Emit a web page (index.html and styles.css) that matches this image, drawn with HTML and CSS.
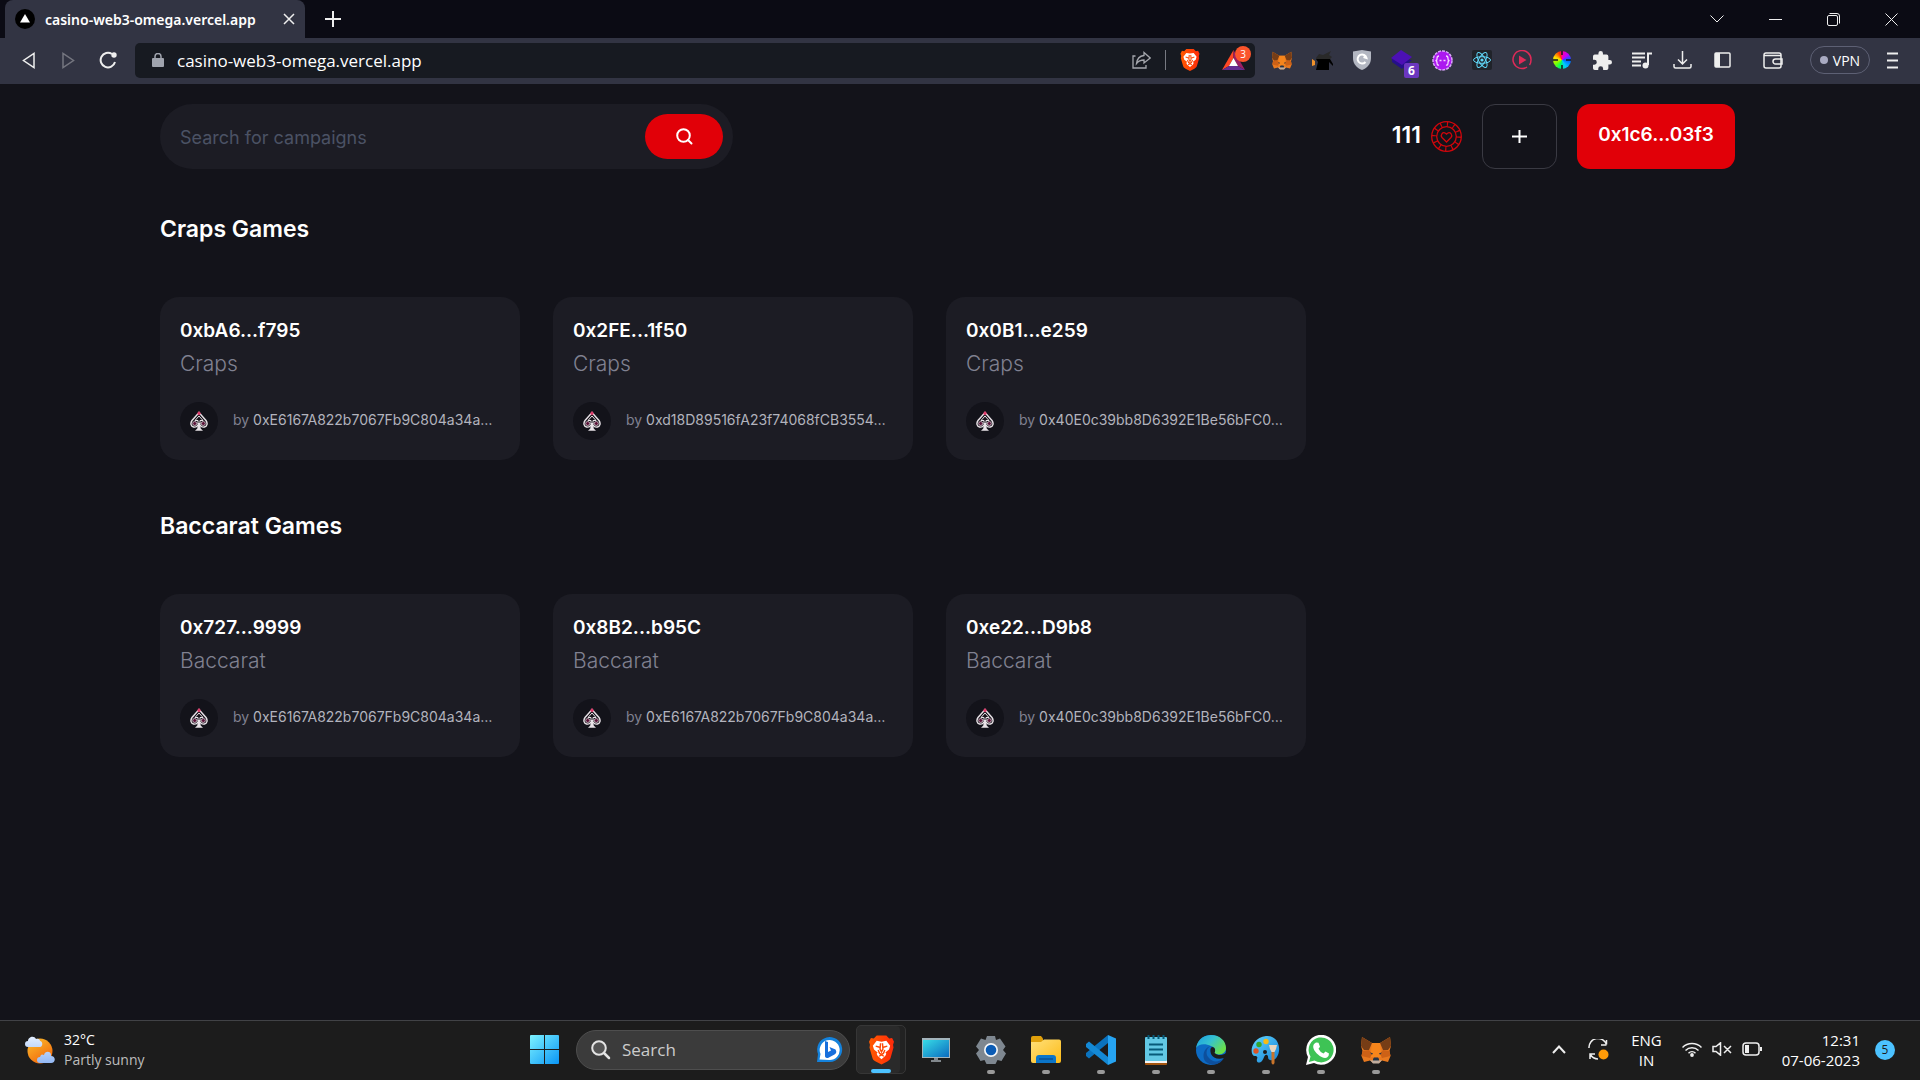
FILE: index.html
```html
<!DOCTYPE html>
<html lang="en">

<head>
    <meta charset="UTF-8">
    <title>casino-web3-omega.vercel.app</title>
    <link rel="stylesheet" href="styles.css">
</head>

<body>
    <!-- shared icons -->
    <svg class="defs" aria-hidden="true">
        <defs>
            <linearGradient id="gBrave" x2="1"><stop stop-color="#ff5a00"/><stop offset="1" stop-color="#ff2a0a"/></linearGradient>
            <linearGradient id="gWin" x2="1" y2="1"><stop stop-color="#7df3ff"/><stop offset="1" stop-color="#0a95f5"/></linearGradient>
            <linearGradient id="gScreen" x2="1" y2="1"><stop stop-color="#37dbe6"/><stop offset="1" stop-color="#0b6cc0"/></linearGradient>
            <linearGradient id="gSun" x2=".6" y2="1"><stop stop-color="#fbc02d"/><stop offset="1" stop-color="#f26a0c"/></linearGradient>
            <linearGradient id="gFolder" x2="1" y2="1"><stop stop-color="#ffe07a"/><stop offset="1" stop-color="#fdbb17"/></linearGradient>
            <linearGradient id="gEdge" x2="1" y2=".6"><stop stop-color="#1b9de2"/><stop offset=".5" stop-color="#35c1d0"/><stop offset="1" stop-color="#6be04a"/></linearGradient>
            <linearGradient id="gPaint" x2="1" y2="1"><stop stop-color="#62d8ff"/><stop offset="1" stop-color="#1380d8"/></linearGradient>
            <linearGradient id="gCloud" y2="1" x2="0"><stop stop-color="#e3efff"/><stop offset="1" stop-color="#93b8f3"/></linearGradient>
        </defs>
        <symbol id="brave" viewBox="0 0 26 30">
            <path fill="url(#gBrave)" d="M8 0h10l3 3 3-.5 2 4-1 3 .5 3-3 10.500c-.5 2-2 3-3.500 4L13 30l-6-3c-2-1-3-2-3.500-4L.5 12.500 1 9.500 0 6.500l2-4L5 3z"/>
            <path fill="#fff" d="M8 5.500l5 .8 5-.8 4 5-1.200 4-3.800 3 1 1.500-1 2-4 3.500-4-3.500-1-2 1-1.500-3.800-3L4 10.500z"/>
            <path fill="none" stroke="#ff4a08" stroke-width="1.500" d="M7 11l4 1.200M19 11l-4 1.200M12 8l-.5 6 1.500 3 1.500-3-.5-6M9.500 15l1.500 3.500 2 1 2-1 1.500-3.500M10.500 21.500l2.500-1.500 2.500 1.500"/>
        </symbol>
        <symbol id="fox" viewBox="0 0 30 28">
            <path fill="#e8791f" d="M1 1l10 6h8L29 1l1 9-1.500 5 1 5-2.500 6-6-1.500-3 2.500h-6l-3-2.500L3 26 .5 20l1-5L0 10z"/>
            <path fill="#763d16" d="M1 1l10 6-3 7H3l-3-4zM29 1l-10 6 3 7h5l3-4z"/>
            <path fill="#f6851b" d="M11 7h8l1 8 1.500 6h-13L10 15z"/>
            <path fill="#cd6116" d="M1.500 15L8 14l3 4-2 4-8.500-2zM28.500 15l-6.500-1-3 4 2 4 8.500-2z"/>
            <path fill="#233447" d="M9 16.500l3 .8-1 1.400zM21 16.500l-3 .8 1 1.400zM12 23l1-1.500h4l1 1.500v2h-6z"/>
            <path fill="#c0ad9e" d="M9 24l3 .5h6l3-.5-3 3.500h-6z"/>
        </symbol>
        <symbol id="spade" viewBox="0 0 18 20">
            <path fill="#17131a" stroke="#e9e3e8" stroke-width="1.400" d="M9 1.500L12 5l4 4.500c2 3 1 6-1.500 6.500-1.800.4-3.300-.2-4-1.500h-3c-.7 1.300-2.200 1.900-4 1.500C1 15.500 0 12.500 2 9.500L6 5z"/>
            <path fill="none" stroke="#e9e3e8" d="M9 5L5 9.500h3V13M9 5l4 4.500h-3V13"/>
            <path fill="#e9e3e8" d="M7.800 12h2.400l.5 5.500L13 19.800H5l2.300-2.300z"/>
            <circle cx="4.700" cy="12.500" r="2" fill="#5a1238" stroke="#d8c8d2" stroke-width=".8"/>
            <circle cx="13.300" cy="12.500" r="2" fill="#5a1238" stroke="#d8c8d2" stroke-width=".8"/>
            <path fill="#e0406e" d="M9 0l2 2.500-2 2-2-2z"/>
        </symbol>
    </svg>

    <!-- browser chrome -->
    <header class="browser">
        <div class="tabs">
            <div class="tab">
                <svg class="favicon" viewBox="0 0 20 20"><circle cx="10" cy="10" r="10" fill="#000"/><path d="M10 5l5 8.500H5z" fill="#fff"/></svg>
                <span class="tab-title">casino-web3-omega.vercel.app</span>
                <button class="tab-close" aria-label="Close tab"><svg width="12" height="12" viewBox="0 0 12 12"><path class="line" d="M1 1l10 10M11 1L1 11"/></svg></button>
            </div>
            <button class="new-tab" aria-label="New tab"><svg width="16" height="16" viewBox="0 0 16 16"><path class="line thick" d="M8 0v16M0 8h16"/></svg></button>
            <div class="window-buttons">
                <button aria-label="Search tabs"><svg width="14" height="8" viewBox="0 0 14 8"><path class="line thin" d="M.5.5L7 7 13.500.5"/></svg></button>
                <button aria-label="Minimize"><svg width="13" height="13" viewBox="0 0 13 13"><path class="line thin" d="M0 6.500h13"/></svg></button>
                <button aria-label="Restore"><svg width="13" height="13" viewBox="0 0 13 13"><rect class="line thin" x=".5" y="2.500" width="10" height="10" rx="1.500"/><path class="line thin" d="M2.500.5h7.500q2.500 0 2.500 2.500v7.500"/></svg></button>
                <button aria-label="Close"><svg width="13" height="13" viewBox="0 0 13 13"><path class="line thin" d="M.5.5l12 12M12.500.5l-12 12"/></svg></button>
            </div>
        </div>
        <div class="toolbar">
            <button class="tool" aria-label="Back"><svg width="13" height="17" viewBox="0 0 13 17"><path class="line" d="M12 1.500v14L1.500 8.500z"/></svg></button>
            <button class="tool dim" aria-label="Forward"><svg width="13" height="17" viewBox="0 0 13 17"><path class="line" d="M1 1.500v14l10.500-7z"/></svg></button>
            <button class="tool" aria-label="Reload"><svg width="18" height="18" viewBox="0 0 18 18"><path class="line thick" d="M13 3A7.300 7.300 0 1 0 16 11"/><circle cx="15" cy="4" r="2.700" fill="#eee"/></svg></button>
            <div class="address">
                <svg class="lock" width="12" height="14" viewBox="0 0 12 14"><rect y="5" width="12" height="9" rx="1" fill="#a0a4ae"/><path d="M3 6V3.500a3 3 0 0 1 6 0V6" fill="none" stroke="#a0a4ae" stroke-width="1.500"/></svg>
                <input type="text" class="url" aria-label="Address" value="casino-web3-omega.vercel.app">
                <button class="share" aria-label="Share"><svg width="19" height="18" viewBox="0 0 19 18"><path fill="none" stroke="#a5a7ad" stroke-width="1.300" d="M3.500 5H1v12h13v-3M12 1.500L18.200 7 12 12V9C8.500 9 6 10.500 4.500 12.500 5 8 8 5 12 4.500z"/></svg></button>
                <button class="shields" aria-label="Shields"><svg width="20" height="22"><use href="#brave"/></svg></button>
                <button class="rewards" aria-label="Rewards"><svg width="23" height="20" viewBox="0 0 23 20"><path fill="#ff4724" d="M11.500 0L0 20l7-4 4.500-8z"/><path fill="#9e1f63" d="M11.500 0L23 20l-7-4-4.500-8z"/><path fill="#662d91" d="M0 20h23l-7-4H7z"/><path fill="#fff" d="M11.500 8L7 16h9z"/></svg><span class="rewards-count">3</span></button>
            </div>
            <div class="extensions">
                <button class="tool" aria-label="MetaMask"><svg width="20" height="19"><use href="#fox"/></svg></button>
                <button class="tool" aria-label="Cat"><svg width="21" height="20" viewBox="0 0 21 20"><path fill="#292929" d="M4 8l3-4 4 1 8-4-2 4 3 2-2 2H4z"/><path fill="#000" d="M4 9h14l3 5v2l-4-4v8H4l2-8z"/><path fill="#f0922b" d="M0 9l3 2v4l-3 1z"/></svg></button>
                <button class="tool" aria-label="Shield"><svg width="18" height="20" viewBox="0 0 18 20"><path fill="#b3b7c2" d="M0 1.500L9 0l9 1.500V8c0 6-4 10-9 12C4 18 0 14 0 8z"/><path fill="none" stroke="#fff" stroke-width="2" d="M12.500 12A4.500 4.500 0 1 1 13.500 8l-3-1"/></svg></button>
                <button class="tool stack" aria-label="Requests"><svg width="22" height="20" viewBox="0 0 22 20"><path fill="#25108a" d="M1 8l20 2-10 9L1 12z"/><path fill="#4c10b5" d="M10 0l11 7-10 8L0 8z"/></svg><span class="ext-count">6</span></button>
                <button class="tool" aria-label="Code"><svg width="21" height="21" viewBox="0 0 21 21"><circle cx="10.500" cy="10.500" r="9.500" fill="#ac18f0" stroke="#dca6ff" stroke-width="1.500" stroke-dasharray="3 1"/><path fill="none" stroke="#f3d3ff" stroke-width="1.300" d="M7 6q-2 0-2 2.500T3.500 10.500Q5 10.500 5 13t2 2M14 6q2 0 2 2.500t1.500 2Q16 10.500 16 13t-2 2M7.500 10.500h2M11.500 10.500h2"/></svg></button>
                <button class="tool" aria-label="React tools"><svg width="20" height="20" viewBox="0 0 20 20"><rect width="20" height="20" rx="2" fill="#20232a"/><g fill="none" stroke="#61dafb"><ellipse cx="10" cy="10" rx="8.500" ry="3.300"/><ellipse cx="10" cy="10" rx="8.500" ry="3.300" transform="rotate(60 10 10)"/><ellipse cx="10" cy="10" rx="8.500" ry="3.300" transform="rotate(120 10 10)"/></g><circle cx="10" cy="10" r="1.600" fill="#61dafb"/></svg></button>
                <button class="tool" aria-label="Player"><svg width="20" height="20" viewBox="0 0 20 20"><path fill="none" stroke="#e02a58" stroke-width="1.500" d="M15 17A9 9 0 1 1 19 10q0 3-1.500 5"/><path fill="#e02a58" d="M7 5.500l7.500 4.500L7 14.500z"/></svg></button>
                <button class="tool" aria-label="Color picker"><span class="wheel"><svg width="18" height="18" viewBox="0 0 18 18"><path stroke="#16161c" stroke-width="1.500" d="M9 0v4M9 14v4M0 9h5M13 9h5"/></svg></span></button>
                <button class="tool" aria-label="Extensions"><svg width="19" height="19" viewBox="2 1 21 21"><path fill="#eee" d="M20.500 11H19V7a2 2 0 0 0-2-2h-4V3.500a2.500 2.500 0 0 0-5 0V5H4a2 2 0 0 0-2 2v3.800h1.500a2.700 2.700 0 0 1 0 5.400H2V20a2 2 0 0 0 2 2h3.800v-1.500a2.700 2.700 0 0 1 5.400 0V22H17a2 2 0 0 0 2-2v-4h1.500a2.500 2.500 0 0 0 0-5z"/></svg></button>
                <button class="tool" aria-label="Media"><svg width="20" height="17" viewBox="0 0 20 17"><path class="line thick" d="M0 1.500h13M0 5.500h13M0 9.500h9M0 13.500h9M16 13V1.500h4"/><circle cx="13.500" cy="13.500" r="3" fill="#eee"/></svg></button>
                <button class="tool" aria-label="Downloads"><svg width="19" height="18" viewBox="0 0 19 18"><path class="line" d="M9.500 0v13M5 8.500l4.500 4.500L14 8.500M1 13v2.500q0 1.500 1.500 1.500h14q1.500 0 1.500-1.500V13"/></svg></button>
                <button class="tool" aria-label="Sidebar"><svg width="17" height="16" viewBox="0 0 17 16"><rect class="line" x="1" y="1" width="15" height="14" rx="1"/><path fill="#eee" d="M1 1h5v14H1z"/></svg></button>
            </div>
            <button class="tool wallet" aria-label="Wallet"><svg width="20" height="18" viewBox="0 0 20 18"><rect class="line" x="1" y="2" width="17" height="15" rx="2"/><path class="line" d="M1 4.500h17M19 8h-6.500a2.500 2.500 0 0 0 0 5H19z"/></svg></button>
            <button class="vpn">VPN</button>
            <button class="tool menu" aria-label="Menu"><svg width="11" height="17" viewBox="0 0 11 17"><path class="line thick" d="M0 1.500h11M0 8.500h11M0 15.500h11"/></svg></button>
        </div>
    </header>

    <!-- casino page -->
    <main class="page">
        <nav class="navbar">
            <form class="search">
                <input type="text" class="search-input" aria-label="Search for campaigns" placeholder="Search for campaigns">
                <button type="button" class="search-button" aria-label="Search"><svg width="17" height="17" viewBox="0 0 17 17"><circle cx="7.500" cy="7.500" r="6.300" fill="none" stroke="#fff" stroke-width="2"/><path stroke="#fff" stroke-width="2" stroke-linecap="round" d="M12 12l3.500 3.500"/></svg></button>
            </form>
            <div class="account">
                <div class="balance">
                    <span>111</span>
                    <svg width="31" height="31" viewBox="0 0 31 31" fill="none" stroke="#d0060c" stroke-width="1.300">
                        <circle cx="15.500" cy="15.500" r="14.800"/>
                        <circle cx="15.500" cy="15.500" r="9.800"/>
                        <circle cx="15.500" cy="15.500" r="12.300" stroke-width="5" stroke-dasharray="1.200 5.240"/>
                        <path d="M15.500 21l-4.500-4.500c-2-2.500.5-6 3.500-4.300l1 1 1-1c3-1.700 5.500 1.800 3.500 4.300z"/>
                    </svg>
                </div>
                <button class="add" aria-label="Add chips"><svg width="15" height="13" viewBox="0 0 15 13"><path stroke="#fff" stroke-width="2" d="M7.500 0v13M0 6.500h15"/></svg></button>
                <button class="wallet-address">0x1c6...03f3</button>
            </div>
        </nav>

        <section class="games">
            <h1>Craps Games</h1>
            <div class="cards">
                <article class="card">
                    <h2>0xbA6...f795</h2>
                    <p class="kind">Craps</p>
                    <div class="owner"><span class="avatar"><svg width="18" height="20"><use href="#spade"/></svg></span><p>by <span>0xE6167A822b7067Fb9C804a34a…</span></p></div>
                </article>
                <article class="card">
                    <h2>0x2FE...1f50</h2>
                    <p class="kind">Craps</p>
                    <div class="owner"><span class="avatar"><svg width="18" height="20"><use href="#spade"/></svg></span><p>by <span>0xd18D89516fA23f74068fCB3554…</span></p></div>
                </article>
                <article class="card">
                    <h2>0x0B1...e259</h2>
                    <p class="kind">Craps</p>
                    <div class="owner"><span class="avatar"><svg width="18" height="20"><use href="#spade"/></svg></span><p>by <span>0x40E0c39bb8D6392E1Be56bFC0…</span></p></div>
                </article>
            </div>
        </section>

        <section class="games">
            <h1>Baccarat Games</h1>
            <div class="cards">
                <article class="card">
                    <h2>0x727...9999</h2>
                    <p class="kind">Baccarat</p>
                    <div class="owner"><span class="avatar"><svg width="18" height="20"><use href="#spade"/></svg></span><p>by <span>0xE6167A822b7067Fb9C804a34a…</span></p></div>
                </article>
                <article class="card">
                    <h2>0x8B2...b95C</h2>
                    <p class="kind">Baccarat</p>
                    <div class="owner"><span class="avatar"><svg width="18" height="20"><use href="#spade"/></svg></span><p>by <span>0xE6167A822b7067Fb9C804a34a…</span></p></div>
                </article>
                <article class="card">
                    <h2>0xe22...D9b8</h2>
                    <p class="kind">Baccarat</p>
                    <div class="owner"><span class="avatar"><svg width="18" height="20"><use href="#spade"/></svg></span><p>by <span>0x40E0c39bb8D6392E1Be56bFC0…</span></p></div>
                </article>
            </div>
        </section>
    </main>

    <!-- windows taskbar -->
    <footer class="taskbar">
        <div class="weather">
            <svg width="30" height="28" viewBox="0 0 30 28"><circle cx="15" cy="15" r="12.500" fill="url(#gSun)"/><path fill="url(#gCloud)" d="M3 11a3 3 0 0 1 0-6c0-4 6-6 8-2 3-1 4 1 4 2 3 0 3 6 0 6zM15 27a3 3 0 0 1 0-6c1-3 2-3 4-2 1-5 8-4 7 1 5 0 5 7 0 7z"/></svg>
            <div><p>32°C</p><p class="muted">Partly sunny</p></div>
        </div>
        <div class="apps">
            <button class="app" aria-label="Start"><svg width="29" height="29" viewBox="0 0 29 29"><path fill="url(#gWin)" d="M1 0h13v14H0V1q0-1 1-1zM15 0h13q1 0 1 1v13H15zM0 15h14v14H1q-1 0-1-1zM15 15h14v13q0 1-1 1H15z"/></svg></button>
            <label class="task-search">
                <svg width="20" height="20" viewBox="0 0 20 20"><circle cx="8" cy="8" r="6.800" fill="#555" stroke="#e4e4e4" stroke-width="2"/><path stroke="#e4e4e4" stroke-width="2.500" stroke-linecap="round" d="M13 13l5 5"/></svg>
                <input type="text" aria-label="Search Windows" placeholder="Search">
                <svg width="26" height="26" viewBox="0 0 26 26"><path fill="#1482dc" d="M0 25l1-8A12.500 12.500 0 1 1 13 25z"/><path fill="#fff" d="M2.500 22.500l1-5.500a10 10 0 1 1 9 6z"/><path fill="#176fdc" d="M8 4l3 1v10l3-1.500-1.500-3.500 6 2.500q2 3-1 5L11 21q-3 0-3-2z"/></svg>
            </label>
            <button class="app active" aria-label="Brave"><svg width="25" height="30"><use href="#brave"/></svg></button>
            <button class="app" aria-label="This PC"><svg width="28" height="24" viewBox="0 0 28 24"><path fill="#81878c" d="M12 18h4v4h3v2H9v-2h3z"/><path fill="#a3b4bb" d="M0 0h28v20H0z"/><path fill="url(#gScreen)" d="M1 2h26v17H1z"/></svg></button>
            <button class="app open" aria-label="Settings"><svg width="30" height="30" viewBox="0 0 30 30"><path fill="#7e8790" d="M11 1l8 0 1 4 4-1.500 5.500 8L27 15l3 3.500-4.500 7.500-4-1-2 4h-9l-2-4-4 1L0 18.500 3 15 0 11.500 5 3.500 9.500 5z"/><circle cx="15" cy="15" r="7" fill="#f3f5f7"/><circle cx="15" cy="15" r="5.300" fill="#0b5cb5"/></svg></button>
            <button class="app open" aria-label="File Explorer"><svg width="30" height="27" viewBox="0 0 30 27"><path fill="#e0a00b" d="M0 2q0-2 2-2h8l2 2.500V8H0z"/><path fill="url(#gFolder)" d="M0 6h10l3-2.500h15q2 0 2 2V25q0 2-2 2H2q-2 0-2-2z"/><path fill="#0b75c9" d="M5 27v-5q0-3 3-3h14q3 0 3 3v5z"/><path stroke="#063f7c" d="M8 23h14"/></svg></button>
            <button class="app open" aria-label="Visual Studio Code"><svg width="30" height="30" viewBox="0 0 30 30"><path fill="#0b73be" d="M22 0v8L3 23.500 0 21v-3z"/><path fill="#1489d5" d="M0 9l3-2.500L22 22v8L0 12z"/><path fill="#26a4f2" d="M22 0l8 3.500v23L22 30z"/></svg></button>
            <button class="app open" aria-label="Notepad"><svg width="22" height="30" viewBox="0 0 22 30"><rect y="24" width="22" height="6" rx="1" fill="#a4550f"/><rect y="22" width="22" height="6" fill="#f4f4f4"/><rect y="2" width="22" height="24" rx="1" fill="#62c8e4"/><path stroke="#075a79" stroke-width="2" d="M4 9.500h14M4 14.500h14M4 19.500h14M3.500 0v4M8.500 0v4M13.500 0v4M18.500 0v4"/></svg></button>
            <button class="app open" aria-label="Edge"><svg width="30" height="30" viewBox="0 0 30 30"><circle cx="15" cy="15" r="15" fill="#0d6bc4"/><path fill="url(#gEdge)" d="M0 13C2 3 9 0 15 0c9 0 15 6 15 13 0 6-7 8-12 5 2-2 1-6-3-7C9 8 2 9 0 13z"/><path fill="#0d4f9c" d="M15 11c-5 2-6 8-2 12 4 5 10 4 15 0-5 8-13 8-18 4C5 22 8 12 15 11z"/><path fill="#1c1c1c" d="M16 12c3 0 4 3 2.500 6 2.500 2.500 7.500 3 11.500 0v4l-2 1c-6 2-11 0-13-4-1-3-1-6 1-7z"/></svg></button>
            <button class="app open" aria-label="Paint"><svg width="30" height="30" viewBox="0 0 30 30"><path fill="url(#gPaint)" d="M15 1C24 0 29 8 28 16c-1 7-5 10-9 9-3-1-1-4-3-5-3-1-3 4-5 6-3 3-6 1-5-2 1-2 0-3-2-3-6 0-5-18 11-20z"/><circle cx="8" cy="9.500" r="2.700" fill="#31a52c"/><circle cx="15" cy="6.500" r="2.700" fill="#f6bb13"/><circle cx="5" cy="16" r="2.700" fill="#db5426"/><circle cx="14" cy="17" r="2" fill="#1c1c1c"/><path fill="#c9742a" d="M20.500 17h3v11q-1.500 3-3 0z"/><path fill="#e8d6bf" d="M18 10h8l-1 4-1.500 3h-3L19 14z"/></svg></button>
            <button class="app open" aria-label="WhatsApp"><svg width="30" height="30" viewBox="0 0 30 30"><path fill="#fff" d="M0 30l2-8A15 15 0 1 1 8 28z"/><path fill="#3ec355" d="M3 27l1.500-5.500A12.500 12.500 0 1 1 8.500 25.500z"/><path fill="#fff" d="M10 7.500l2.500.2 1.500 4-1.500 2q1.500 3.300 5 4.800l2-2 3.500 2q0 3-2 4c-2 1-6 0-9-3-4-3.500-6-7.500-4-10.500z"/></svg></button>
            <button class="app open" aria-label="MetaMask"><svg width="30" height="28"><use href="#fox"/></svg></button>
        </div>
        <div class="tray">
            <button class="tray-more" aria-label="Hidden icons"><svg width="14" height="9" viewBox="0 0 14 9"><path class="line thick" d="M1 8l6-6.500L13 8"/></svg></button>
            <svg width="21" height="21" viewBox="0 0 21 21"><path class="line" d="M1 9A9 9 0 0 1 18.500 5.500V1M18.500 6H13M2 20v-5h5M2 15q3 5 8 5"/><circle cx="15.500" cy="15.500" r="5" fill="#ff9b08"/></svg>
            <div class="language"><p>ENG</p><p>IN</p></div>
            <div class="status">
                <svg width="20" height="15" viewBox="0 0 20 15"><path class="line" d="M.5 5.500a13.500 13.500 0 0 1 19 0M3.500 8.500a9.300 9.300 0 0 1 13 0M6.500 11.200a5 5 0 0 1 7 0"/><circle cx="10" cy="13" r="1.900" fill="#eee"/></svg>
                <svg width="20" height="14" viewBox="0 0 20 14"><path class="line" d="M1 4.500h3L8.500.800v12.400L4 9.500H1zM12 4l7 7M19 4l-7 7"/></svg>
                <svg width="20" height="14" viewBox="0 0 20 14"><rect class="line" x="1" y="1" width="16" height="12" rx="3"/><path fill="#eee" d="M3 3h4v8H3zM18 5h2v4h-2z"/></svg>
            </div>
            <div class="clock"><p>12:31</p><p>07-06-2023</p></div>
            <span class="notifications">5</span>
        </div>
    </footer>
</body>

</html>
```
FILE: styles.css
```css
* {
    box-sizing: border-box;
}

body {
    background-color: #13131a;
    color: #ffffff;
    display: flex;
    flex-direction: column;
    font-family: "Open Sans", "Noto Sans", sans-serif;
    margin: 0;
    min-height: 100vh;
}

h1, h2, p {
    margin: 0;
}

button, input {
    background: none;
    border: none;
    color: inherit;
    font-family: inherit;
    margin: 0;
    outline: none;
    padding: 0;
}

button {
    align-items: center;
    display: flex;
    justify-content: center;
}

svg {
    flex: none;
}

.defs {
    height: 0;
    position: absolute;
    width: 0;
}

.line {
    fill: none;
    stroke: #eeeeee;
    stroke-width: 1.5;
}

.thin {
    stroke-width: 1;
}

.thick {
    stroke-width: 2;
}

/* browser */
.tabs {
    background-color: #0b0b14;
    display: flex;
    height: 38px;
    padding-left: 5px;
}

.tab {
    align-items: center;
    background-color: #323443;
    border-radius: 8px 8px 0 0;
    display: flex;
    padding: 0 10px;
    width: 300px;
}

.favicon {
    height: 20px;
    margin-right: 10px;
    width: 20px;
}

.tab-title {
    flex: 1;
    font-family: "Noto Sans", sans-serif;
    font-size: 14px;
    font-weight: 600;
    white-space: nowrap;
}

.new-tab {
    margin-left: 20px;
}

.window-buttons {
    display: flex;
    margin-left: auto;
}

.window-buttons button {
    width: 58px;
}

.toolbar {
    align-items: center;
    background-color: #323443;
    display: flex;
    height: 46px;
    padding: 0 6px 2px 8px;
}

.tool {
    flex: none;
    height: 40px;
    position: relative;
    width: 40px;
}

.dim {
    opacity: 0.35;
}

.address {
    align-items: center;
    background-color: #171a21;
    border-radius: 5px;
    display: flex;
    flex: 1;
    height: 35px;
    margin: 0 7px;
    padding: 0 10px 0 17px;
}

.url {
    flex: 1;
    font-size: 17px;
    margin-left: 13px;
}

.share {
    border-right: 1px solid #777a82;
    height: 20px;
    padding-right: 14px;
}

.shields {
    margin: 0 22px 0 14px;
}

.rewards {
    position: relative;
}

.rewards-count {
    background-color: #fb542b;
    border-radius: 8px;
    font-size: 10px;
    line-height: 16px;
    position: absolute;
    right: -6px;
    top: -4px;
    width: 16px;
}

.extensions {
    display: flex;
}

.ext-count {
    background-color: #6b37bf;
    border-radius: 2px;
    bottom: 2px;
    font-size: 12px;
    font-weight: bold;
    line-height: 15px;
    position: absolute;
    right: 3px;
    width: 15px;
}

.wheel {
    background: conic-gradient(#ff00a0, #c000ff 45deg, #0060ff 90deg, #00c8ff 150deg, #00ff60 200deg, #80ff00 240deg, #ffe000 290deg, #ff3000 340deg, #ff00a0);
    border-radius: 9px;
    display: flex;
}

.wallet {
    margin: 0 17px 0 11px;
}

.vpn {
    border: 1px solid #5d6074;
    border-radius: 14px;
    font-size: 14px;
    gap: 5px;
    height: 28px;
    width: 60px;
}

.vpn::before {
    background-color: #a9abc2;
    border-radius: 4px;
    content: "";
    height: 8px;
    width: 8px;
}

.menu {
    width: 44px;
}

/* page */
.page {
    flex: 1;
    font-family: Inter, sans-serif;
    padding: 20px 185px 0 160px;
}

.navbar {
    display: flex;
    justify-content: space-between;
}

.search {
    align-items: center;
    background-color: #1c1c24;
    border-radius: 33px;
    display: flex;
    height: 65px;
    padding: 0 10px 0 20px;
    width: 573px;
}

.search-input {
    flex: 1;
    font-size: 18px;
    padding-top: 2px;
}

.search-input::placeholder {
    color: #4b5264;
}

.search-button {
    background-color: #e10008;
    border-radius: 23px;
    height: 45px;
    width: 78px;
}

.account {
    display: flex;
    gap: 20px;
}

.balance {
    align-items: center;
    display: flex;
    font-size: 23px;
    font-weight: 600;
    gap: 10px;
}

.balance span {
    padding-bottom: 4px;
}

.add {
    border: 1px solid #3a3a43;
    border-radius: 13px;
    height: 65px;
    width: 75px;
}

.wallet-address {
    background-color: #e10008;
    border-radius: 13px;
    font-size: 19px;
    font-weight: 600;
    height: 65px;
    padding-bottom: 4px;
    width: 158px;
}

.games {
    margin-bottom: 6px;
}

.games h1 {
    font-size: 23px;
    font-weight: 600;
    line-height: 28px;
    padding: 46px 0 54px;
}

.cards {
    display: flex;
    flex-wrap: wrap;
    gap: 33px;
}

.card {
    background-color: #1c1c24;
    border-radius: 19px;
    padding: 20px;
    width: 360px;
}

.card h2 {
    font-size: 19px;
    font-weight: 600;
    line-height: 28px;
}

.kind {
    color: #808191;
    font-size: 21px;
    font-weight: 300;
    line-height: 38px;
}

.owner {
    align-items: center;
    color: #808191;
    display: flex;
    font-size: 14px;
    gap: 15px;
    margin-top: 19px;
    white-space: nowrap;
}

.owner p {
    padding-bottom: 4px;
}

.owner p span {
    color: #b2b3bd;
}

.avatar {
    align-items: center;
    background-color: #13131a;
    border-radius: 19px;
    display: flex;
    height: 38px;
    justify-content: center;
    width: 38px;
}

/* taskbar */
.taskbar {
    background-color: #1c1c1c;
    border-top: 1px solid #414246;
    display: grid;
    font-size: 15px;
    grid-template-columns: 1fr auto 1fr;
    height: 60px;
    line-height: 20px;
    padding-bottom: 2px;
}

.weather {
    align-items: center;
    display: flex;
    font-size: 14px;
    gap: 9px;
    padding-left: 25px;
}

.muted {
    color: #bdbdbd;
}

.apps {
    align-items: center;
    display: flex;
}

.app {
    height: 49px;
    position: relative;
    width: 55px;
}

.task-search {
    align-items: center;
    background-color: #3b3b3b;
    border: 1px solid #4e4e4e;
    border-radius: 20px;
    display: flex;
    height: 40px;
    margin: 0 3px 0 4px;
    padding: 0 6px 0 14px;
    width: 274px;
}

.task-search input {
    flex: 1;
    font-size: 17px;
    margin-left: 11px;
    min-width: 0;
}

.task-search input::placeholder {
    color: #cccccc;
}

.active {
    background-color: #2a2a2a;
    border: 1px solid #363636;
    border-radius: 5px;
    box-shadow: inset -5px 0 0 #222222;
    margin: 0 2px 0 3px;
    width: 50px;
}

.active::after, .open::after {
    background-color: #999999;
    border-radius: 2px;
    bottom: 0;
    content: "";
    height: 4px;
    position: absolute;
    width: 8px;
}

.active::after {
    background-color: #4cc2ff;
    width: 20px;
}

.tray {
    align-items: center;
    display: flex;
    justify-content: flex-end;
    padding-right: 25px;
}

.tray-more {
    margin-right: 22px;
}

.language {
    margin: 0 20px 0 22px;
    text-align: center;
}

.status {
    display: flex;
    gap: 10px;
    margin-right: 20px;
}

.clock {
    text-align: right;
}

.notifications {
    background-color: #4cc2ff;
    border-radius: 10px;
    color: #1c1c1c;
    font-size: 12px;
    margin-left: 15px;
    text-align: center;
    width: 20px;
}
```
